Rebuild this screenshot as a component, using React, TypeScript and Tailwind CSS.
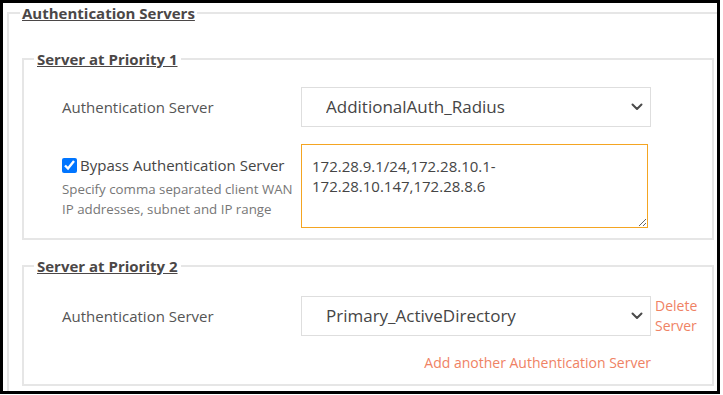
import React from "react";

const Chevron = () => (
  <svg width="12" height="8" viewBox="0 0 12 8" className="absolute right-[8px] top-1/2 -translate-y-1/2 pointer-events-none">
    <path d="M1.5 1.5 L6 6 L10.5 1.5" fill="none" stroke="#4a4a4a" strokeWidth="2" strokeLinecap="round" strokeLinejoin="round" />
  </svg>
);

const Select = ({ value }: { value: string }) => (
  <div className="relative w-[350px] h-[40px]">
    <select
      defaultValue={value}
      className="appearance-none w-full h-full border border-[#dedede] bg-white pl-[24px] text-[17px] text-[#454545] outline-none"
    >
      <option>{value}</option>
    </select>
    <Chevron />
  </div>
);

export default function App() {
  return (
    <div className="w-[723px] h-[395px] bg-white" style={{ fontFamily: '"Open Sans", "Noto Sans", sans-serif' }}>
      <div className="w-[720px] h-[394px] border-[3px] border-black overflow-hidden">
        <fieldset className="ml-[4px] w-[722px] border-2 border-[#e6e6e6] p-0 pb-[20px]">
          <legend className="ml-[11px] px-[2px] text-[15px] leading-[20px] font-bold underline text-[#4b4747]">
            Authentication Servers
          </legend>
          <div className="px-[13px] pt-[26px]">
            <fieldset className="border-2 border-[#e6e6e6] p-0 pb-[10px]">
              <legend className="ml-[10px] px-[3px] text-[15px] leading-[20px] font-bold underline text-[#4b4747]">
                Server at Priority 1
              </legend>
              <div className="pl-[38px] pt-[18px] flex flex-col gap-[17px]">
                <div className="flex items-center">
                  <div className="w-[239px] text-[15px] text-[#555]">Authentication Server</div>
                  <Select value="AdditionalAuth_Radius" />
                </div>
                <div className="flex items-start">
                  <div className="w-[239px] pt-[11px]">
                    <label className="flex items-center text-[15px] leading-[20px] text-[#454545]">
                      <input type="checkbox" defaultChecked className="w-[15px] h-[15px] mr-[3px] accent-[#0075ff]" />
                      Bypass Authentication Server
                    </label>
                    <div className="text-[13.3px] leading-[20px] text-[#777] mt-[4px] whitespace-nowrap">
                      Specify comma separated client WAN
                      <br />
                      IP addresses, subnet and IP range
                    </div>
                  </div>
                  <textarea
                    defaultValue={"172.28.9.1/24,172.28.10.1-\n172.28.10.147,172.28.8.6"}
                    className="w-[347px] h-[84px] border border-[#f4a522] pl-[10px] pt-[11px] text-[15px] leading-[20px] text-[#454545] outline-none"
                  />
                </div>
              </div>
            </fieldset>
            <fieldset className="mt-[16px] border-2 border-[#e6e6e6] p-0 pb-[11px]">
              <legend className="ml-[10px] px-[3px] text-[15px] leading-[20px] font-bold underline text-[#4b4747]">
                Server at Priority 2
              </legend>
              <div className="pl-[38px] pt-[20px]">
                <div className="flex items-center">
                  <div className="w-[239px] text-[15px] text-[#555]">Authentication Server</div>
                  <Select value="Primary_ActiveDirectory" />
                  <a className="ml-[4px] text-[14px] leading-[20px] text-[#ef8264] cursor-pointer">
                    Delete
                    <br />
                    Server
                  </a>
                </div>
                <div className="w-[589px] text-right mt-[17px] text-[14px] leading-[20px] text-[#ef8264]">
                  <a className="cursor-pointer">Add another Authentication Server</a>
                </div>
              </div>
            </fieldset>
          </div>
        </fieldset>
      </div>
    </div>
  );
}
